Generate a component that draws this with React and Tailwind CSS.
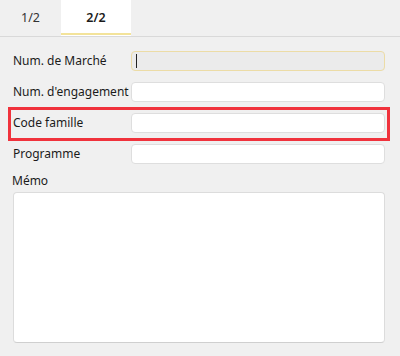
import React from 'react';

const Field = ({ label, active }) => (
    <div className="flex items-center h-[20px]">
        <span className="w-[118px] shrink-0 text-[12px] text-[#1b1b1b] leading-none">{label}</span>
        {active ? (
            <div className="flex-1 h-[20px] rounded-[4px] bg-[#ebebeb] border border-[#ecdca6] flex items-center pl-[4px]">
                <span className="w-px h-[14px] bg-[#222]" />
            </div>
        ) : (
            <div className="flex-1 h-[20px] rounded-[4px] bg-white border border-[#dedede]" />
        )}
    </div>
);

const App = () => {
    return (
        <div
            className="w-[400px] h-[356px] bg-[#f0f0f0] overflow-hidden"
            style={{ fontFamily: '"Noto Sans", "Open Sans", sans-serif' }}
        >
            {/* tabs */}
            <div className="flex h-[37px] border-b border-[#d9d9d9]">
                <div className="w-[61px] flex items-center justify-center text-[12.5px] text-[#333]">1/2</div>
                <div className="w-[70px] relative bg-white flex items-center justify-center text-[12.5px] font-semibold text-[#1b1b1b]">
                    2/2
                    <span className="absolute left-0 right-0 bottom-[1px] h-[2px] bg-[#f3e39a]" />
                </div>
            </div>

            <div className="pl-[13px] pr-[15px] pt-[14px] flex flex-col">
                <Field label="Num. de Marché" active />
                <div className="mt-[11px]">
                    <Field label="Num. d'engagement" />
                </div>
                <div className="mt-[5px] -mx-[5px] border-[3px] border-[#f0323c] pl-[2px] pr-[2px] pt-[3px] pb-[5px]">
                    <Field label="Code famille" />
                </div>
                <div className="mt-[3px]">
                    <Field label="Programme" />
                </div>
                <div className="mt-[9px] -ml-[1px] text-[12px] text-[#1b1b1b] leading-[16px]">Mémo</div>
                <div className="mt-[3px] h-[151px] rounded-[4px] bg-white border border-[#dcdcdc] border-b-[#cfcfcf]" />
            </div>
        </div>
    );
};

export default App;
